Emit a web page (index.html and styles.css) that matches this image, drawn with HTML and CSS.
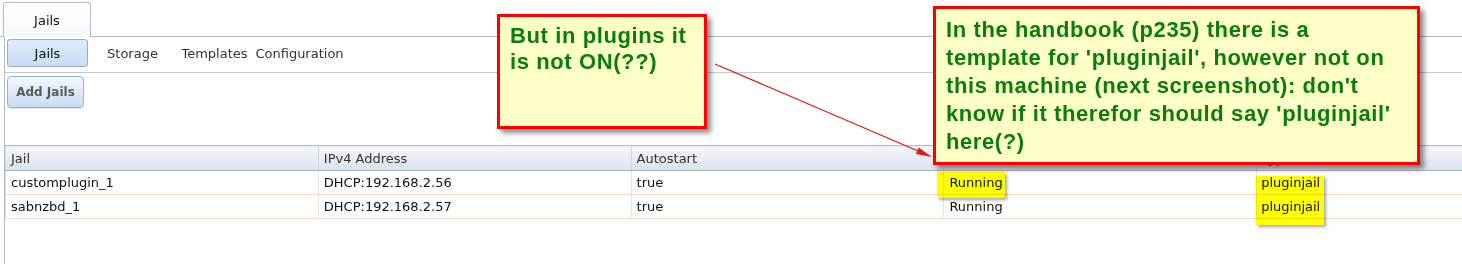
FILE: index.html
```html
<!DOCTYPE html>
<html>
<head>
  <meta charset="UTF-8">
  <title>Jails</title>
  <link rel="stylesheet" href="styles.css">
</head>
<body>
  <div class="page">
    <div class="tabbar">
      <div class="tab">Jails</div>
    </div>
    <div class="panel">
      <nav class="subnav">
        <a class="navitem active">Jails</a>
        <a class="navitem">Storage</a>
        <a class="navitem">Templates</a>
        <a class="navitem">Configuration</a>
      </nav>
      <div class="toolbar">
        <button class="btn">Add Jails</button>
      </div>
      <table class="grid">
        <thead>
          <tr><th>Jail</th><th>IPv4 Address</th><th>Autostart</th><th>Status</th><th>Type</th></tr>
        </thead>
        <tbody>
          <tr><td>customplugin_1</td><td>DHCP:192.168.2.56</td><td>true</td><td>Running</td><td>pluginjail</td></tr>
          <tr><td>sabnzbd_1</td><td>DHCP:192.168.2.57</td><td>true</td><td>Running</td><td>pluginjail</td></tr>
        </tbody>
      </table>
    </div>

    <!-- annotations drawn over the screenshot -->
    <div class="hl hl-status"></div>
    <div class="hl hl-type"></div>
    <svg class="arrows" width="1462" height="264" viewBox="0 0 1462 264">
      <line x1="715" y1="64" x2="918" y2="151" stroke="#e01b1b" stroke-width="1.3"/>
      <polygon points="932,157 915.9,153.9 918.7,147.5" fill="#e01b1b"/>
      <line x1="1180" y1="145" x2="1234" y2="160" stroke="#e01b1b" stroke-width="1.3"/>
      <polygon points="1250,165 1231.7,163.4 1233.7,156.7" fill="#e01b1b"/>
    </svg>
    <div class="note note-a">But in plugins it<br>is not ON(??)</div>
    <div class="note note-b">In the handbook (p235) there is a<br>template for 'pluginjail', however not on<br>this machine (next screenshot): don't<br>know if it therefor should say 'pluginjail'<br>here(?)</div>
  </div>
</body>
</html>
```

FILE: styles.css
```css
body { margin: 0; font-family: "DejaVu Sans", Verdana, sans-serif; background: #fff; color: #222; overflow: hidden; }
.page { position: relative; width: 1462px; height: 264px; overflow: hidden; }

.tabbar { display: flex; padding: 2px 0 0 3px; border-bottom: 1px solid #aebbcc; }
.tab { width: 86px; height: 34px; margin-bottom: -1px; border: 1px solid #aebbcc; border-bottom: none; border-radius: 3px 3px 0 0; background: linear-gradient(#ffffff, #f6f9fc); display: flex; align-items: center; justify-content: center; font-size: 13px; color: #111; }

.panel { margin-left: 4px; border-left: 1px solid #aebbcc; height: 227px; }
.subnav { display: flex; gap: 4px; box-sizing: border-box; height: 36px; padding: 2px 0 0 2px; border-bottom: 1px solid #c3cad4; }
.navitem { width: 81px; height: 28px; box-sizing: border-box; display: flex; align-items: center; justify-content: center; font-size: 13px; color: #333; white-space: nowrap; }
.navitem.active { background: linear-gradient(#dcebfb, #c7ddf4); border: 1px solid #8fb0d3; border-radius: 3px; color: #111; }
.navitem:nth-child(3) { margin-left: -3px; }

.toolbar { box-sizing: border-box; height: 72px; padding: 3px 0 0 2px; }
.btn { width: 77px; height: 32px; font: bold 12px "DejaVu Sans", Verdana, sans-serif; color: #5b5b5b; background: linear-gradient(#f3f8fd, #c8dbf0); border: 1px solid #98b3cf; border-radius: 4px; box-shadow: 0 1px 1px rgba(0,0,0,0.12); }

.grid { border-collapse: collapse; table-layout: fixed; width: 1565px; font-size: 13px; border-left: 1px solid #d6dce3; }
.grid th { height: 24px; padding: 0 5px; text-align: left; font-weight: normal; color: #333; background: linear-gradient(#f4f7fa, #dbe2ea); border-top: 1px solid #b4bdc8; border-bottom: 1px solid #aab4c0; border-right: 1px solid #cfd6de; }
.grid td { height: 23px; padding: 0 5px; color: #111; border-bottom: 1px solid #f4dac6; border-right: 1px solid #f1e2d6; white-space: nowrap; }
.grid td:nth-child(5) { padding-left: 4px; }

.hl { position: absolute; background: #ffff00; mix-blend-mode: multiply; box-shadow: 2px 2px 3px rgba(0,0,0,0.35); }
.hl-status { left: 937px; top: 172px; width: 68px; height: 26px; }
.hl-type { left: 1256px; top: 176px; width: 68px; height: 49px; }

.arrows { position: absolute; left: 0; top: 0; pointer-events: none; }

.note { position: absolute; box-sizing: border-box; background: #ffffc8; border: 3px solid #f00; box-shadow: 4px 4px 5px rgba(0,0,0,0.45); color: #0b7d0b; font: bold 22px/27px "Liberation Sans", Arial, sans-serif; letter-spacing: 0.6px; white-space: nowrap; }
.note-a { left: 497px; top: 14px; width: 210px; height: 115px; padding: 6px 0 0 10px; line-height: 26px; }
.note-b { left: 933px; top: 6px; width: 487px; height: 159px; padding: 7px 0 0 10px; line-height: 28px; }
```
